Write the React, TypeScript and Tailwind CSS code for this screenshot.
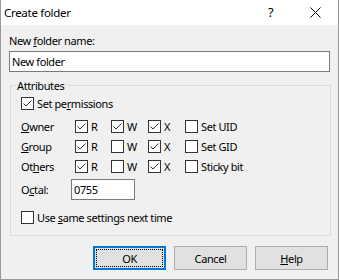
import React from "react";

function Box({ checked }: { checked?: boolean }) {
  return (
    <span className="w-[13px] h-[13px] border border-[#333333] bg-white flex items-center justify-center shrink-0">
      {checked && (
        <svg width="11" height="11" viewBox="0 0 11 11">
          <path d="M1.5 5.5 L4 8 L9.5 2.5" fill="none" stroke="#333333" strokeWidth="1" />
        </svg>
      )}
    </span>
  );
}

function Check({ checked, children, w }: { checked?: boolean; children?: React.ReactNode; w?: string }) {
  return (
    <div className={`flex items-center gap-[3px] ${w ?? ""}`}>
      <Box checked={checked} />
      {children && <span>{children}</span>}
    </div>
  );
}

function PermRow({ label, r, w, x, special }: { label: React.ReactNode; r: boolean; w: boolean; x: boolean; special: string }) {
  return (
    <div className="h-[20px] flex items-center">
      <div className="w-[54px]">{label}</div>
      <Check checked={r} w="w-[36px]">R</Check>
      <Check checked={w} w="w-[37px]">W</Check>
      <Check checked={x} w="w-[37px]">X</Check>
      <Check>{special}</Check>
    </div>
  );
}

export default function App() {
  return (
    <div className="w-[339px] h-[280px] bg-[#f0f0f0] border-x border-b border-[#999999] flex flex-col font-['Noto_Sans',sans-serif] text-[11px] tracking-[-0.4px] leading-[15px] text-black">
      {/* Title bar */}
      <div className="h-[25px] bg-white flex items-center shrink-0">
        <span className="pl-[3px] flex-1 text-[11.5px] tracking-[-0.3px]">Create folder</span>
        <div className="w-[45px] h-full flex items-center justify-center text-[13px]">?</div>
        <div className="w-[45px] h-full flex items-center justify-center">
          <svg width="11" height="11" viewBox="0 0 11 11">
            <path d="M0.5 0.5 L10.5 10.5 M10.5 0.5 L0.5 10.5" stroke="#000" strokeWidth="1" />
          </svg>
        </div>
      </div>

      <div className="px-[8px] pt-[8px]">
        <div>
          New <span className="underline">f</span>older name:
        </div>
        <div className="mt-[3px] h-[21px] border border-[#7a7a7a] bg-white px-[2px] flex items-center">New folder</div>

        {/* Attributes */}
        <fieldset className="mt-[6px] ml-[1px] mr-[-1px] border border-[#dcdcdc] pb-[10px]">
          <legend className="ml-[5px] px-[1px]">Attributes</legend>
          <div className="pl-[10px] pt-[3px]">
            <Check checked>
              Set pe<span className="underline">r</span>missions
            </Check>
            <div className="mt-[5px]">
              <PermRow label={<><span className="underline">O</span>wner</>} r w x special="Set UID" />
              <PermRow label={<><span className="underline">G</span>roup</>} r w={false} x special="Set GID" />
              <PermRow label={<>Ot<span className="underline">h</span>ers</>} r w={false} x special="Sticky bit" />
            </div>
            <div className="mt-[3px] flex items-center">
              <div className="w-[50px]">
                O<span className="underline">c</span>tal:
              </div>
              <div className="w-[64px] h-[21px] border border-[#7a7a7a] bg-white px-[2px] flex items-center">0755</div>
            </div>
            <div className="mt-[10px]">
              <Check>
                Use <span className="underline">s</span>ame settings next time
              </Check>
            </div>
          </div>
        </fieldset>
      </div>

      {/* Buttons */}
      <div className="mt-[10px] pr-[10px] flex justify-end gap-[8px]">
        <div className="w-[73px] h-[24px] border-2 border-[#0078d7] bg-[#e1e1e1] flex">
          <div className="flex-1 m-[1px] border border-dotted border-black flex items-center justify-center">OK</div>
        </div>
        <div className="w-[73px] h-[24px] border border-[#adadad] bg-[#e1e1e1] flex items-center justify-center">Cancel</div>
        <div className="w-[73px] h-[24px] border border-[#adadad] bg-[#e1e1e1] flex items-center justify-center">
          <span>
            <span className="underline">H</span>elp
          </span>
        </div>
      </div>
    </div>
  );
}
